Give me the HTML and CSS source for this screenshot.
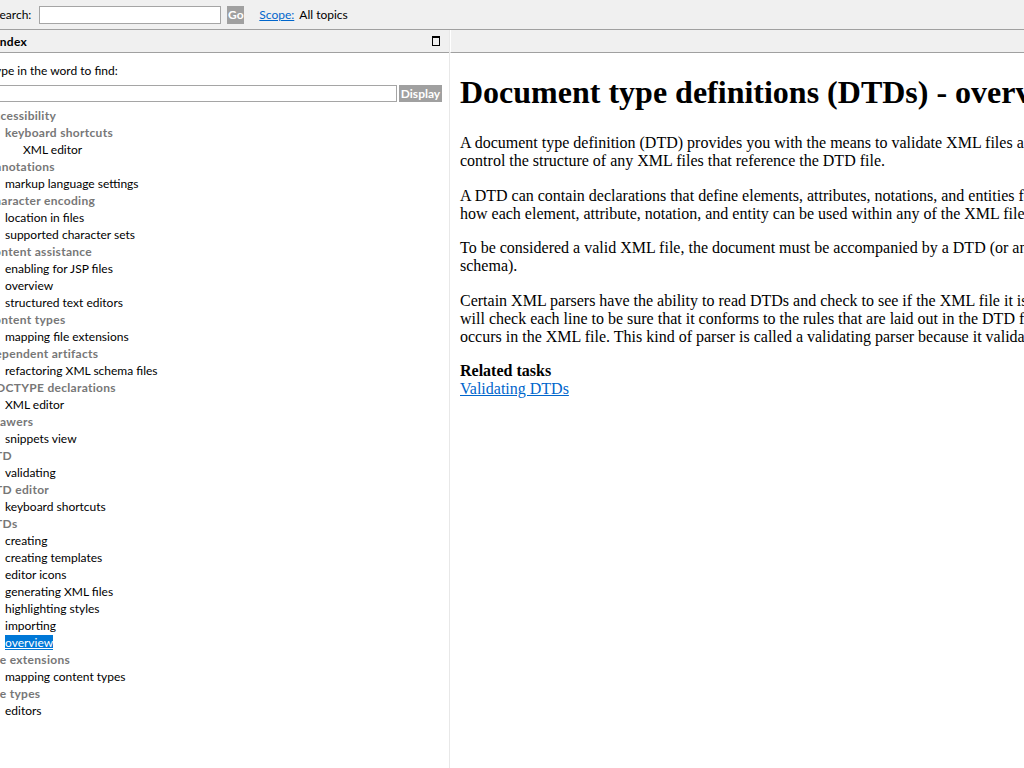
FILE: index.html
```html
<!DOCTYPE html>
<html>
<head>
<meta charset="utf-8">
<link rel="stylesheet" href="styles.css">
</head>
<body>
<div class="topbar">
  <span class="search-label">Search:</span>
  <input class="search-input" type="text">
  <span class="btn go">Go</span>
  <a class="scope-link" href="#">Scope:</a>
  <span class="scope-value">All topics</span>
</div>
<div class="main">
  <div class="left">
    <div class="panel-head">
      <span class="panel-title">Index</span>
      <span class="max-icon"></span>
    </div>
    <div class="index-body">
      <div class="prompt">Type in the word to find:</div>
      <div class="find-row">
        <input class="find-input" type="text">
        <span class="btn display">Display</span>
      </div>
      <ul class="index-list">
        <li class="h">Accessibility</li>
        <li class="h l1">keyboard shortcuts</li>
        <li class="l2">XML editor</li>
        <li class="h">Annotations</li>
        <li class="l1">markup language settings</li>
        <li class="h">Character encoding</li>
        <li class="l1">location in files</li>
        <li class="l1">supported character sets</li>
        <li class="h">Content assistance</li>
        <li class="l1">enabling for JSP files</li>
        <li class="l1">overview</li>
        <li class="l1">structured text editors</li>
        <li class="h">Content types</li>
        <li class="l1">mapping file extensions</li>
        <li class="h">Dependent artifacts</li>
        <li class="l1">refactoring XML schema files</li>
        <li class="h">DOCTYPE declarations</li>
        <li class="l1">XML editor</li>
        <li class="h">Drawers</li>
        <li class="l1">snippets view</li>
        <li class="h">DTD</li>
        <li class="l1">validating</li>
        <li class="h">DTD editor</li>
        <li class="l1">keyboard shortcuts</li>
        <li class="h">DTDs</li>
        <li class="l1">creating</li>
        <li class="l1">creating templates</li>
        <li class="l1">editor icons</li>
        <li class="l1">generating XML files</li>
        <li class="l1">highlighting styles</li>
        <li class="l1">importing</li>
        <li class="l1"><span class="selected">overview</span></li>
        <li class="h">File extensions</li>
        <li class="l1">mapping content types</li>
        <li class="h">File types</li>
        <li class="l1">editors</li>
      </ul>
    </div>
  </div>
  <div class="right">
    <div class="panel-head right-head"></div>
    <div class="content">
      <h1>Document type definitions (DTDs) - overview</h1>
      <p>A document type definition (DTD) provides you with the means to validate XML files against a set of rules. When you create a DTD file, you can specify rules that<br>control the structure of any XML files that reference the DTD file.</p>
      <p>A DTD can contain declarations that define elements, attributes, notations, and entities for any XML files that reference the DTD file. It also establishes constraints for<br>how each element, attribute, notation, and entity can be used within any of the XML files that reference the DTD file.</p>
      <p>To be considered a valid XML file, the document must be accompanied by a DTD (or an XML schema), and conform to all of the declarations in the DTD (or XML<br>schema).</p>
      <p>Certain XML parsers have the ability to read DTDs and check to see if the XML file it is reading conforms to the rules in the DTD. This means that the parser<br>will check each line to be sure that it conforms to the rules that are laid out in the DTD file, for example that every element is declared in the DTD each time it<br>occurs in the XML file. This kind of parser is called a validating parser because it validates the XML file against the DTD.</p>
      <div class="related">
        <strong>Related tasks</strong><br>
        <a href="#">Validating DTDs</a>
      </div>
    </div>
  </div>
</div>
</body>
</html>
```
FILE: styles.css
```css
html, body {
  margin: 0;
  padding: 0;
  height: 100%;
  overflow: hidden;
  background: #ffffff;
}
body {
  font-family: Lato, "Noto Sans", sans-serif;
  font-size: 12px;
  color: #000;
}
.topbar {
  height: 29px;
  background: #f0f0f0;
  border-bottom: 1px solid #a0a0a0;
  display: flex;
  align-items: center;
  white-space: nowrap;
}
.search-label {
  margin-left: -7px;
}
.search-input {
  box-sizing: border-box;
  width: 182px;
  height: 18px;
  margin: 0 0 0 8px;
  border: 1px solid #a5a5a5;
  background: #fff;
  padding: 0;
}
.btn {
  display: inline-flex;
  align-items: center;
  justify-content: center;
  background: #a0a0a0;
  color: #fff;
  font-weight: bold;
  height: 18px;
}
.go {
  width: 17px;
  margin-left: 6px;
}
.scope-link {
  margin-left: 15px;
  color: #0066cc;
}
.scope-value {
  margin-left: 5px;
}
.main {
  display: flex;
  height: calc(100% - 30px);
}
.left {
  width: 449px;
  flex: none;
  border-right: 1px solid #e8e8e8;
  overflow: hidden;
}
.right {
  flex: 1;
  overflow: hidden;
}
.panel-head {
  box-sizing: border-box;
  height: 23px;
  background: #f0f0f0;
  border-bottom: 1px solid #a0a0a0;
  display: flex;
  align-items: center;
  justify-content: space-between;
}
.panel-title {
  font-weight: bold;
  letter-spacing: 0.3px;
  margin-left: -4px;
}
.max-icon {
  box-sizing: border-box;
  width: 8px;
  height: 10px;
  border: 1px solid #000;
  border-top-width: 2px;
  margin-right: 9px;
}
.index-body {
  margin-left: -14px;
  padding-top: 9px;
  white-space: nowrap;
}
.prompt {
  line-height: 17px;
  padding-left: 3px;
}
.find-row {
  display: flex;
  margin-top: 6px;
  padding-left: 3px;
  align-items: stretch;
}
.find-input {
  box-sizing: border-box;
  width: 408px;
  height: 17px;
  border: 1px solid #a5a5a5;
  padding: 0;
  margin: 0;
}
.display {
  width: 43px;
  height: 17px;
  margin-left: 2px;
}
.index-list {
  list-style: none;
  margin: 5px 0 0 0;
  padding: 0;
}
.index-list li {
  line-height: 17px;
  height: 17px;
}
.index-list .h {
  font-weight: bold;
  letter-spacing: 0.3px;
  color: #777777;
}
.index-list .l1 {
  padding-left: 19px;
}
.index-list .l2 {
  padding-left: 37px;
}
.selected {
  background: #0078d7;
  color: #fff;
  text-decoration: underline;
  display: inline-block;
  line-height: 15px;
}
.right-head {
  border-left: 1px solid #ffffff;
}
.content {
  padding: 0 8px 0 10px;
  font-family: "Liberation Serif", "Times New Roman", serif;
  font-size: 16px;
}
.content h1 {
  font-size: 32px;
  margin: 21px 0 23px;
  white-space: nowrap;
}
.content p {
  margin: 16.6px 0;
  white-space: nowrap;
}
.related a {
  color: #0066cc;
}
```
